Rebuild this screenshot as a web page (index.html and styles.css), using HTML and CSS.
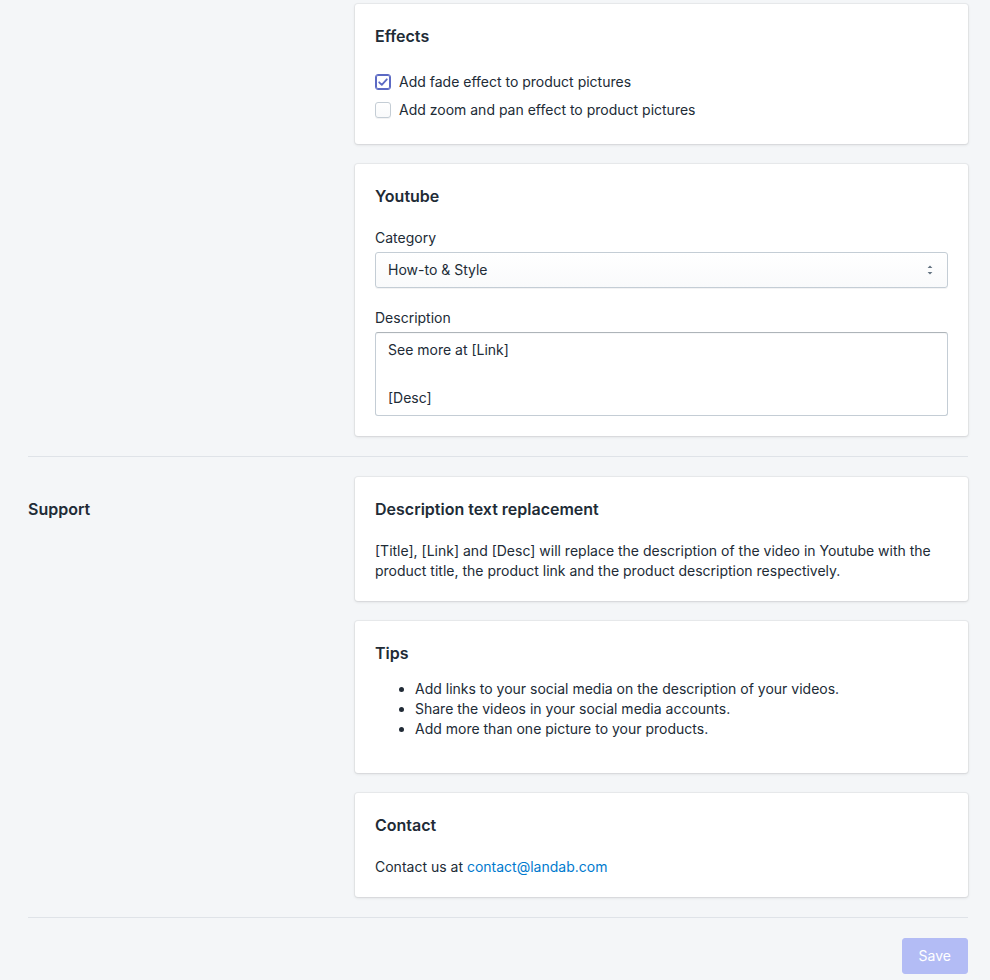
FILE: index.html
```html
<!DOCTYPE html>
<html lang="en">
<head>
<meta charset="utf-8">
<title>Settings</title>
<link rel="stylesheet" href="styles.css">
</head>
<body>
<div class="page">
  <section class="layout-section first">
    <div class="annotation"></div>
    <div class="content">
      <div class="card">
        <div class="card-header"><h2>Effects</h2></div>
        <div class="card-section choices">
          <label class="choice">
            <span class="checkbox checked">
              <svg viewBox="0 0 16 16" width="16" height="16"><path d="M4.2 8.3l2.6 2.6 5-5.6" fill="none" stroke="#5c6ac4" stroke-width="1.8" stroke-linecap="round" stroke-linejoin="round"/></svg>
            </span>
            <span class="choice-label">Add fade effect to product pictures</span>
          </label>
          <label class="choice">
            <span class="checkbox"></span>
            <span class="choice-label">Add zoom and pan effect to product pictures</span>
          </label>
        </div>
      </div>
      <div class="card">
        <div class="card-header"><h2>Youtube</h2></div>
        <div class="card-section form">
          <div class="field">
            <div class="label">Category</div>
            <div class="select">
              <span class="select-value">How-to &amp; Style</span>
              <svg class="select-icon" viewBox="0 0 20 20" width="20" height="20"><path d="M7.6 7.9L10 5.5l2.4 2.4z M7.6 12L10 14.4l2.4-2.4z" fill="#637381"/></svg>
            </div>
          </div>
          <div class="field">
            <div class="label">Description</div>
            <textarea class="textarea" rows="3">See more at [Link]

[Desc]</textarea>
          </div>
        </div>
      </div>
    </div>
  </section>

  <section class="layout-section">
    <div class="annotation"><h2>Support</h2></div>
    <div class="content">
      <div class="card">
        <div class="card-header"><h2>Description text replacement</h2></div>
        <div class="card-section">
          <p class="text">[Title], [Link] and [Desc] will replace the description of the video in Youtube with the product title, the product link and the product description respectively.</p>
        </div>
      </div>
      <div class="card">
        <div class="card-header"><h2>Tips</h2></div>
        <div class="card-section tips">
          <ul class="list">
            <li>Add links to your social media on the description of your videos.</li>
            <li>Share the videos in your social media accounts.</li>
            <li>Add more than one picture to your products.</li>
          </ul>
        </div>
      </div>
      <div class="card">
        <div class="card-header"><h2>Contact</h2></div>
        <div class="card-section">
          <p class="text">Contact us at <a class="link" href="#">contact@landab.com</a></p>
        </div>
      </div>
    </div>
  </section>

  <div class="footer">
    <button class="btn-primary" disabled>Save</button>
  </div>
</div>
</body>
</html>
```

FILE: styles.css
```css
html, body {
  margin: 0;
  padding: 0;
  background: #f4f6f8;
}
body {
  font-family: Inter, "Noto Sans", "Liberation Sans", sans-serif;
  font-size: 14px;
  line-height: 20px;
  color: #212b36;
}
.page {
  padding: 0 22px 0 28px;
}
.layout-section {
  display: flex;
  gap: 20px;
  padding: 20px 0;
  border-bottom: 1px solid #dfe3e8;
}
.layout-section.first {
  padding-top: 4px;
}
.annotation {
  flex: 0 0 307px;
}
.annotation h2 {
  margin: 0;
  padding-top: 20px;
  font-size: 16px;
  line-height: 24px;
  font-weight: 600;
}
.content {
  flex: 1 1 auto;
  display: flex;
  flex-direction: column;
  gap: 20px;
  min-width: 0;
}
.card {
  background: #fff;
  border-radius: 3px;
  box-shadow: 0 0 0 1px rgba(63, 63, 68, 0.05), 0 1px 3px 0 rgba(63, 63, 68, 0.15);
}
.card-header {
  padding: 20px 20px 0;
}
.card-header h2 {
  margin: 0;
  font-size: 16px;
  line-height: 24px;
  font-weight: 600;
}
.card-section {
  padding: 20px;
}
.choices {
  display: flex;
  flex-direction: column;
}
.choice {
  display: flex;
  align-items: center;
  height: 28px;
  cursor: pointer;
}
.checkbox {
  width: 16px;
  height: 16px;
  box-sizing: border-box;
  border: 1px solid #c4cdd5;
  border-radius: 3px;
  background: linear-gradient(to bottom, #fff, #f9fafb);
  box-shadow: 0 1px 0 0 rgba(22, 29, 37, 0.05);
  display: flex;
  align-items: center;
  justify-content: center;
  flex: 0 0 16px;
}
.checkbox svg {
  display: block;
  margin: -1px;
}
.checkbox.checked {
  border: 1px solid #5c6ac4;
  box-shadow: 0 0 0 1px #5c6ac4 inset;
  background: #fff;
}
.choice-label {
  padding-left: 8px;
}
.form {
  display: flex;
  flex-direction: column;
  gap: 20px;
}
.label {
  margin-bottom: 4px;
}
.select {
  position: relative;
  height: 36px;
  box-sizing: border-box;
  border: 1px solid #c4cdd5;
  border-radius: 3px;
  background: linear-gradient(to bottom, #fff, #f9fafb);
  box-shadow: 0 1px 0 0 rgba(22, 29, 37, 0.05);
  display: flex;
  align-items: center;
  justify-content: space-between;
  padding: 0 7px 0 12px;
}
.select-icon {
  display: block;
}
.textarea {
  display: block;
  width: 100%;
  height: 84px;
  box-sizing: border-box;
  margin: 0;
  padding: 5px 12px;
  border: 1px solid #c4cdd5;
  border-top-color: #aeb4b9;
  border-radius: 3px;
  font: inherit;
  line-height: 24px;
  color: #212b36;
  resize: none;
  overflow: hidden;
  background: #fff;
  box-shadow: inset 0 1px 0 0 rgba(99, 115, 129, 0.05);
}
.text {
  margin: 0;
}
.tips {
  padding-top: 0;
}
.list {
  margin: 14px 0;
  padding-left: 40px;
}
.link {
  color: #007ace;
  text-decoration: none;
}
.footer {
  display: flex;
  justify-content: flex-end;
  padding-top: 20px;
}
.btn-primary {
  height: 36px;
  min-width: 66px;
  padding: 0 16px;
  border: 1px solid #b3bcf5;
  border-radius: 3px;
  background: #b3bcf5;
  color: #fff;
  font: inherit;
  font-size: 14px;
}
```
